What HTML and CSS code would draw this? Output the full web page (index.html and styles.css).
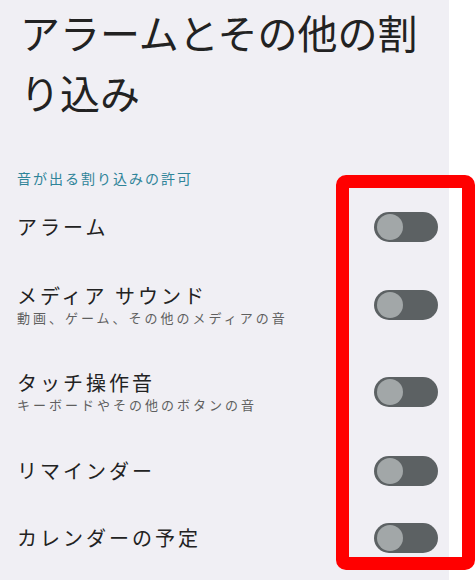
FILE: index.html
```html
<!DOCTYPE html>
<html lang="ja">
<head>
    <meta charset="UTF-8">
    <title>アラームとその他の割り込み</title>
    <link rel="stylesheet" href="styles.css">
</head>
<body>
    <div class="screen">
        <h1 class="page-title">アラームとその他の割り込み</h1>

        <div class="section-label">音が出る割り込みの許可</div>

        <div class="row">
            <div class="row-text">
                <div class="row-title">アラーム</div>
            </div>
            <span class="switch"><span class="thumb"></span></span>
        </div>

        <div class="row">
            <div class="row-text">
                <div class="row-title">メディア サウンド</div>
                <div class="row-sub">動画、ゲーム、その他のメディアの音</div>
            </div>
            <span class="switch"><span class="thumb"></span></span>
        </div>

        <div class="row row-tall">
            <div class="row-text">
                <div class="row-title">タッチ操作音</div>
                <div class="row-sub">キーボードやその他のボタンの音</div>
            </div>
            <span class="switch"><span class="thumb"></span></span>
        </div>

        <div class="row row-short">
            <div class="row-text">
                <div class="row-title">リマインダー</div>
            </div>
            <span class="switch"><span class="thumb"></span></span>
        </div>

        <div class="row row-last">
            <div class="row-text">
                <div class="row-title">カレンダーの予定</div>
            </div>
            <span class="switch"><span class="thumb"></span></span>
        </div>
    </div>

    <!-- annotation frame around the switches -->
    <div class="highlight"></div>
</body>
</html>
```

FILE: styles.css
```css
body {
    margin: 0;
    background-color: #fff;
    font-family: "Noto Sans CJK JP", "Noto Sans", sans-serif;
    color: #1f1f1f;
}

.screen {
    width: 449px;
    height: 580px;
    background-color: #f0eff4;
    overflow: hidden;
}

.page-title {
    margin: 0;
    padding: 2px 0 0 20px;
    font-size: 40px;
    font-weight: 400;
    line-height: 60px;
    color: #222;
}

.section-label {
    margin-top: 46px;
    padding-left: 17px;
    font-size: 14px;
    line-height: 20px;
    letter-spacing: 2px;
    color: #2f8499;
}

.row {
    display: flex;
    align-items: center;
    justify-content: space-between;
    height: 78px;
    padding: 0 11px 0 17px;
}

.row-tall {
    height: 96px;
}

.row-short {
    height: 62px;
}

.row-last {
    height: 72px;
}

.row-title {
    font-size: 20px;
    line-height: 26px;
    letter-spacing: 3px;
    color: #222;
}

.row-sub {
    font-size: 13px;
    line-height: 18px;
    letter-spacing: 3px;
    color: #5f5f5f;
}

.switch {
    position: relative;
    width: 64px;
    height: 30px;
    border-radius: 15px;
    background-color: #5c6163;
    flex-shrink: 0;
}

.switch .thumb {
    position: absolute;
    left: 3px;
    top: 2px;
    width: 26px;
    height: 26px;
    border-radius: 50%;
    background-color: #a2a7a8;
}

.highlight {
    position: absolute;
    left: 336px;
    top: 175px;
    width: 113px;
    height: 369px;
    border: 13px solid #ff0000;
    border-radius: 10px;
}
```
